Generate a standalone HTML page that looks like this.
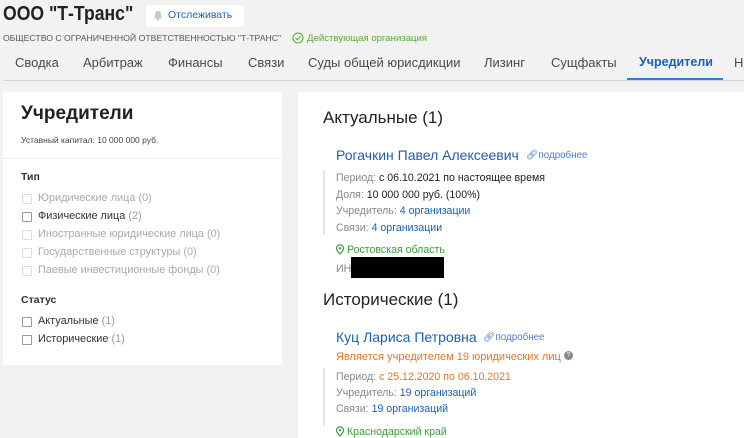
<!DOCTYPE html>
<html><head><meta charset="utf-8">
<style>
*{margin:0;padding:0;box-sizing:border-box}
body{width:744px;height:438px;overflow:hidden;background:#f2f2f3;font-family:"Liberation Sans",sans-serif;position:relative;color:#222}
.a{position:absolute;white-space:nowrap}
.tab{position:absolute;top:55px;font-size:13px;color:#4a4a4a}
.cb{position:absolute;width:10px;height:10px;border:1px solid #999;background:#fff;border-radius:1px}
.cb.d{border-color:#ddd}
.it{position:absolute;font-size:10.9px;color:#333}
.it.d{color:#aaa}
.it span{color:#999}
.lb{color:#888}
.bl{color:#1f5fb0}
.or{color:#e0772c}
.t{font-size:10.6px}
</style></head><body>
<div class="a" style="left:3px;top:3px;font-size:20px;font-weight:bold;color:#222;transform:scaleX(0.88);transform-origin:0 0">ООО "Т-Транс"</div>
<div class="a" style="left:146px;top:5px;width:98px;height:22px;background:#fff;border-radius:3px"></div>
<svg class="a" style="left:153px;top:10px" width="10" height="11" viewBox="0 0 10 11"><path d="M5 1C3 1 2 2.5 2 4.5V7L1 8.5H9L8 7V4.5C8 2.5 7 1 5 1Z" fill="#c8c8c8"/><circle cx="5" cy="9.5" r="1.2" fill="#c8c8c8"/></svg>
<div class="a" style="left:168px;top:9px;font-size:10.5px;color:#1f5fb0">Отслеживать</div>
<div class="a" style="left:3px;top:33px;font-size:8.7px;color:#555">ОБЩЕСТВО С ОГРАНИЧЕННОЙ ОТВЕТСТВЕННОСТЬЮ "Т-ТРАНС"</div>
<svg class="a" style="left:292px;top:32px" width="12" height="12" viewBox="0 0 12 12"><circle cx="6" cy="6" r="5" fill="none" stroke="#5aa83a" stroke-width="1"/><path d="M3.5 6L5.3 7.8L8.5 4.3" fill="none" stroke="#5aa83a" stroke-width="1"/></svg>
<div class="a" style="left:307px;top:33px;font-size:9.6px;color:#5aa83a">Действующая организация</div>
<div class="tab" style="left:15px">Сводка</div>
<div class="tab" style="left:83px">Арбитраж</div>
<div class="tab" style="left:168px">Финансы</div>
<div class="tab" style="left:248px">Связи</div>
<div class="tab" style="left:308px">Суды общей юрисдикции</div>
<div class="tab" style="left:484px">Лизинг</div>
<div class="tab" style="left:551px">Сущфакты</div>
<div class="tab" style="left:639px;color:#1f5fb0;font-weight:bold;font-size:12.5px">Учредители</div>
<div class="tab" style="left:734px">На</div>
<div class="a" style="left:3px;top:80px;width:741px;height:1px;background:#d5d5d5"></div>
<div class="a" style="left:627px;top:78px;width:96px;height:2px;background:#3a78d0"></div>

<div class="a" style="left:3px;top:92px;width:279px;height:273px;background:#fff"></div>
<div class="a" style="left:21px;top:103px;font-size:19px;font-weight:bold;color:#222">Учредители</div>
<div class="a" style="left:21px;top:135px;font-size:8.5px;color:#444">Уставный капитал: 10 000 000 руб.</div>
<div class="a" style="left:3px;top:158px;width:279px;height:1px;background:#eee"></div>
<div class="a" style="left:21px;top:171px;font-size:10.5px;font-weight:bold;color:#333">Тип</div>
<div class="cb d" style="left:22px;top:194px"></div><div class="it d" style="left:38px;top:192px">Юридические лица (0)</div>
<div class="cb" style="left:22px;top:212px"></div><div class="it" style="left:38px;top:210px">Физические лица <span>(2)</span></div>
<div class="cb d" style="left:22px;top:230px"></div><div class="it d" style="left:38px;top:228px">Иностранные юридические лица (0)</div>
<div class="cb d" style="left:22px;top:248px"></div><div class="it d" style="left:38px;top:246px">Государственные структуры (0)</div>
<div class="cb d" style="left:22px;top:266px"></div><div class="it d" style="left:38px;top:264px">Паевые инвестиционные фонды (0)</div>
<div class="a" style="left:21px;top:294px;font-size:10.5px;font-weight:bold;color:#333">Статус</div>
<div class="cb" style="left:22px;top:317px"></div><div class="it" style="left:38px;top:315px">Актуальные <span>(1)</span></div>
<div class="cb" style="left:22px;top:335px"></div><div class="it" style="left:38px;top:333px">Исторические <span>(1)</span></div>

<div class="a" style="left:298px;top:92px;width:446px;height:346px;background:#fff"></div>
<div class="a" style="left:323px;top:108px;font-size:17px;color:#222">Актуальные (1)</div>
<div class="a bl" style="left:336px;top:147px;font-size:14px">Рогачкин Павел Алексеевич</div>
<div class="a" style="left:526px;top:150px;font-size:9.8px;color:#4a7fc8">&#128279;&#xFE0E;подробнее</div>
<div class="a" style="left:323px;top:170px;width:2px;height:65px;background:#e3e6ee"></div>
<div class="a t" style="left:336px;top:172px"><span class="lb">Период:</span> с 06.10.2021 по настоящее время</div>
<div class="a t" style="left:336px;top:189px"><span class="lb">Доля:</span> 10 000 000 руб. (100%)</div>
<div class="a t" style="left:336px;top:205px"><span class="lb">Учредитель:</span> <span class="bl">4 организации</span></div>
<div class="a t" style="left:336px;top:222px"><span class="lb">Связи:</span> <span class="bl">4 организации</span></div>
<svg class="a" style="left:335px;top:244px" width="10" height="11" viewBox="0 0 10 11"><path d="M5 10C5 10 1.5 6.5 1.5 4.3A3.5 3.5 0 0 1 8.5 4.3C8.5 6.5 5 10 5 10Z" fill="none" stroke="#3c9a3c" stroke-width="1.2"/><circle cx="5" cy="4.3" r="1.2" fill="#3c9a3c"/></svg>
<div class="a t" style="left:347px;top:244px;color:#3c9a3c">Ростовская область</div>
<div class="a t" style="left:336px;top:263px;color:#888">ИН</div>
<div class="a" style="left:351px;top:257px;width:93px;height:21px;background:#000"></div>
<div class="a" style="left:323px;top:290px;font-size:17px;color:#222">Исторические (1)</div>
<div class="a bl" style="left:336px;top:329px;font-size:14px">Куц Лариса Петровна</div>
<div class="a" style="left:483px;top:332px;font-size:9.8px;color:#4a7fc8">&#128279;&#xFE0E;подробнее</div>
<div class="a or" style="left:336px;top:351px;font-size:11px">Является учредителем 19 юридических лиц</div>
<div class="a" style="left:564px;top:351px;width:9px;height:9px;border-radius:50%;background:#888;color:#fff;font-size:7px;text-align:center;line-height:9px">?</div>
<div class="a" style="left:323px;top:368px;width:2px;height:58px;background:#e3e6ee"></div>
<div class="a t" style="left:336px;top:371px"><span class="lb">Период:</span> <span class="or">с 25.12.2020 по 06.10.2021</span></div>
<div class="a t" style="left:336px;top:387px"><span class="lb">Учредитель:</span> <span class="bl">19 организаций</span></div>
<div class="a t" style="left:336px;top:403px"><span class="lb">Связи:</span> <span class="bl">19 организаций</span></div>
<svg class="a" style="left:335px;top:426px" width="10" height="11" viewBox="0 0 10 11"><path d="M5 10C5 10 1.5 6.5 1.5 4.3A3.5 3.5 0 0 1 8.5 4.3C8.5 6.5 5 10 5 10Z" fill="none" stroke="#3c9a3c" stroke-width="1.2"/><circle cx="5" cy="4.3" r="1.2" fill="#3c9a3c"/></svg>
<div class="a t" style="left:347px;top:426px;color:#3c9a3c">Краснодарский край</div>
</body></html>
